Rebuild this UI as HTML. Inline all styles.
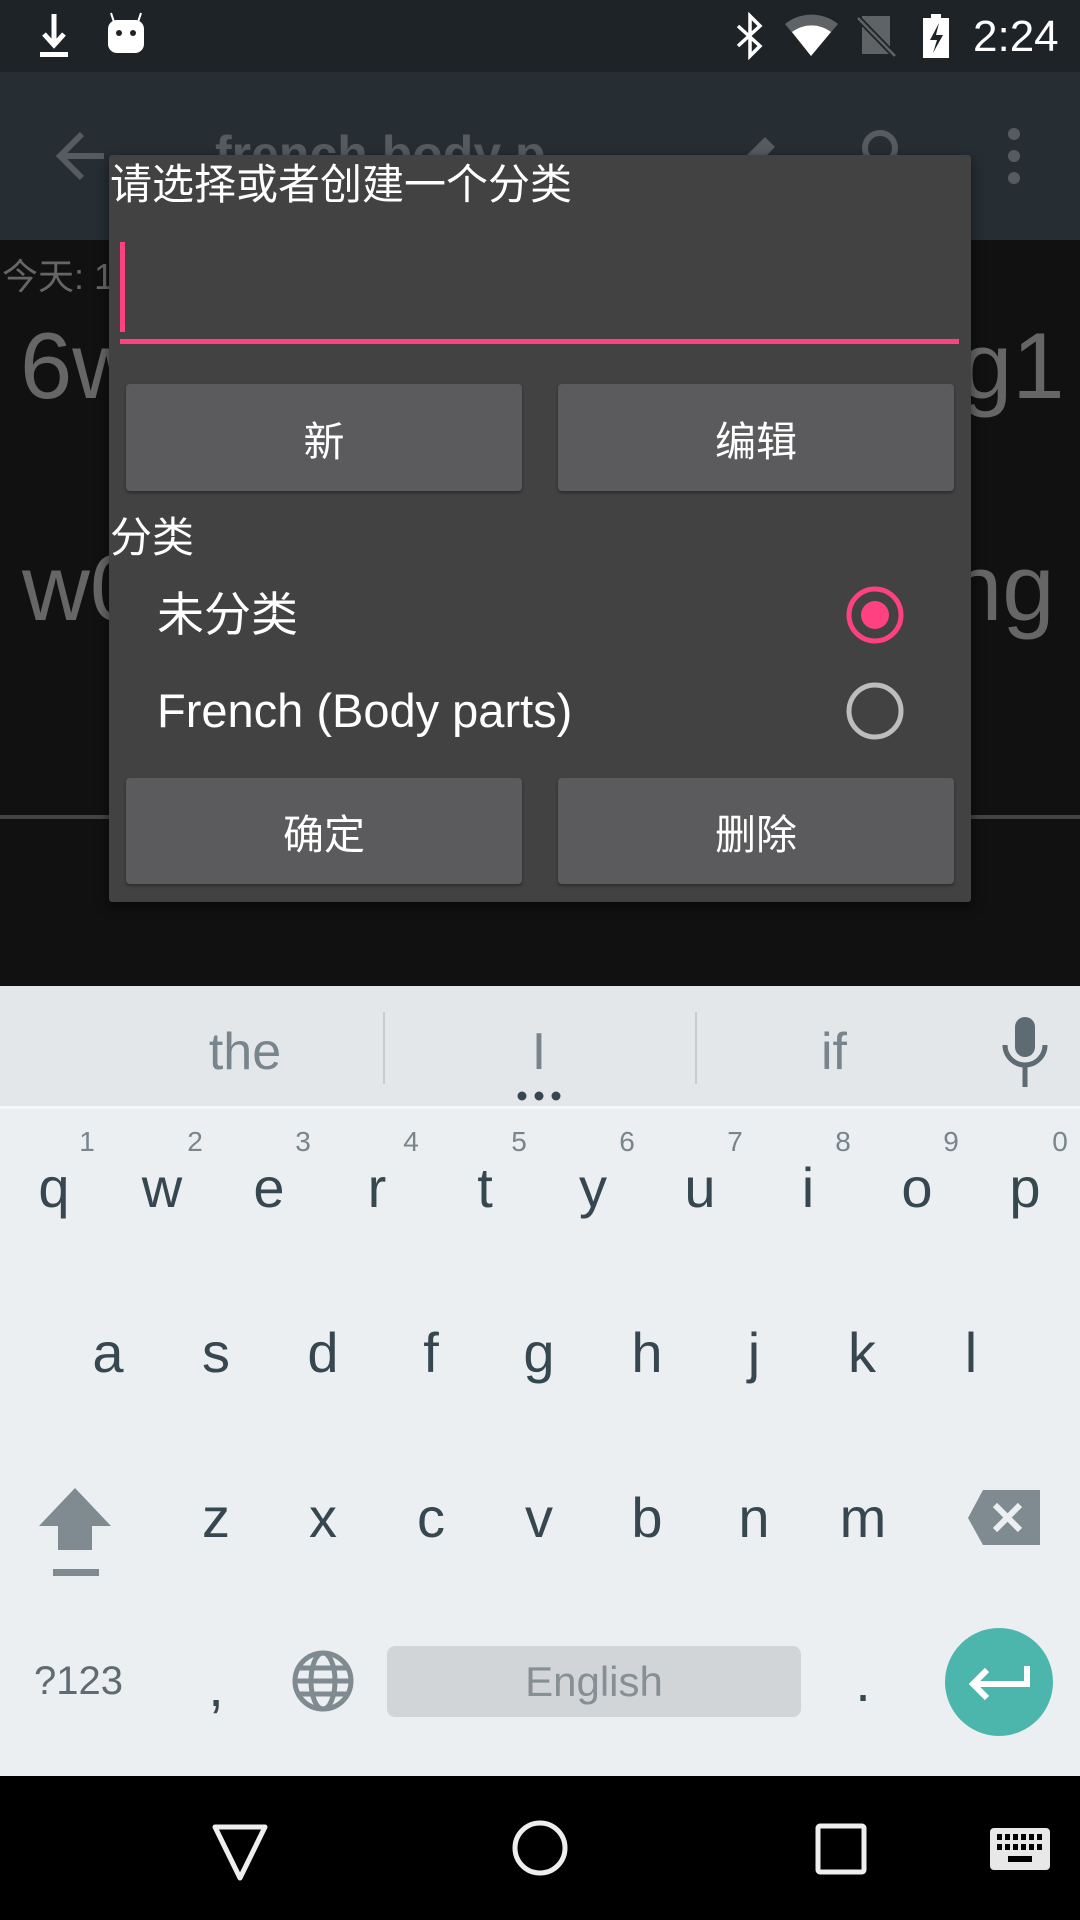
<!DOCTYPE html>
<html><head><meta charset="utf-8"><style>
*{margin:0;padding:0;box-sizing:border-box}
body{width:1080px;height:1920px;position:relative;overflow:hidden;background:#111;font-family:"Liberation Sans","Noto Sans CJK SC",sans-serif}
.a{position:absolute}
.c{position:absolute;text-align:center;white-space:nowrap}
.k{position:absolute;width:100px;text-align:center;color:#37474f;font-size:56px;line-height:70px}
.n{position:absolute;width:40px;text-align:center;color:#78858c;font-size:28px;line-height:30px}
.btn{position:absolute;background:#5b5b5d;border-radius:4px;box-shadow:0 2px 3px rgba(0,0,0,.35);color:#fff;font-size:41px;display:flex;align-items:center;justify-content:center}
</style></head><body>
<div class="a" style="left:0;top:0;width:1080px;height:72px;background:#1e2327"></div>
<svg class="a" style="left:0;top:0" width="1080" height="72">
<path d="M54 14v30M44 34l10 11 10-11" stroke="#fff" stroke-width="5" fill="none"/>
<rect x="40" y="52" width="28" height="5" fill="#fff"/>
<rect x="108" y="20" width="36" height="33" rx="9" fill="#fff"/>
<path d="M114 22l-3-9M138 22l3-9" stroke="#fff" stroke-width="2"/>
<circle cx="119" cy="33" r="3" fill="#1e2327"/><circle cx="133" cy="33" r="3" fill="#1e2327"/>
<path d="M738 26l22 20-10 10V16l10 10-22 20" stroke="#fff" stroke-width="3.5" fill="none"/>
<path d="M785 24a42 42 0 0 1 53 0L811 56z" fill="#5f6366"/>
<path d="M792 32a32 32 0 0 1 39 0L811 56z" fill="#fff"/>
<path d="M862 16h28v38h-28z" fill="#5f6366"/><path d="M858 18l37 38" stroke="#1e2327" stroke-width="6"/><path d="M858 18l37 38" stroke="#5f6366" stroke-width="2.5"/>
<rect x="931" y="14" width="10" height="4" fill="#fff"/><rect x="923" y="18" width="26" height="40" fill="#fff"/>
<path d="M939 23l-9 17h7l-4 13 10-18h-7z" fill="#1e2327"/>
</svg>
<div class="a" style="left:973px;top:13px;font-size:44px;color:#fff;line-height:48px">2:24</div>
<div class="a" style="left:0;top:72px;width:1080px;height:168px;background:#262e33"></div>
<svg class="a" style="left:0;top:72px" width="1080" height="168">
<path d="M104 84h-42M82 62L60 84l22 22" stroke="#555b5f" stroke-width="6" fill="none"/>
<path d="M735 95l30-30 10 10-30 30z" fill="#555b5f"/>
<circle cx="880" cy="76" r="15" stroke="#555b5f" stroke-width="6" fill="none"/>
<circle cx="1014" cy="62" r="6" fill="#555b5f"/><circle cx="1014" cy="84" r="6" fill="#555b5f"/><circle cx="1014" cy="106" r="6" fill="#555b5f"/>
</svg>
<div class="a" style="left:215px;top:125px;font-size:50px;color:#555b5f;font-weight:bold">french body p</div>
<div class="a" style="left:2px;top:248px;font-size:36px;color:#666">今天: 1</div>
<div class="a" style="left:20px;top:316px;font-size:94px;color:#666;line-height:100px">6w</div>
<div class="a" style="left:960px;top:316px;font-size:94px;color:#666;line-height:100px">g1</div>
<div class="a" style="left:22px;top:538px;font-size:94px;color:#666;line-height:100px">w0</div>
<div class="a" style="left:950px;top:538px;font-size:94px;color:#666;line-height:100px">ng</div>
<div class="a" style="left:0;top:815px;width:1080px;height:4px;background:#444"></div>
<div class="a" style="left:109px;top:155px;width:862px;height:747px;background:#424242;border-radius:3px;box-shadow:0 4px 12px rgba(0,0,0,.5)"></div>
<div class="a" style="left:110px;top:160px;font-size:42px;color:#fff;line-height:50px">请选择或者创建一个分类</div>
<div class="a" style="left:120px;top:242px;width:5px;height:90px;background:#ff4081"></div>
<div class="a" style="left:120px;top:339px;width:839px;height:5px;background:#ff4081"></div>
<div class="btn" style="left:126px;top:384px;width:396px;height:107px">新</div>
<div class="btn" style="left:558px;top:384px;width:396px;height:107px">编辑</div>
<div class="a" style="left:110px;top:513px;font-size:42px;color:#fff;line-height:50px">分类</div>
<div class="a" style="left:157px;top:587px;font-size:47px;color:#fff;line-height:56px">未分类</div>
<div class="a" style="left:157px;top:683px;font-size:47px;color:#fff;line-height:56px">French (Body parts)</div>
<svg class="a" style="left:840px;top:580px" width="70" height="170">
<circle cx="35" cy="35" r="26" stroke="#ff4081" stroke-width="5" fill="none"/><circle cx="35" cy="35" r="14" fill="#ff4081"/>
<circle cx="35" cy="131" r="26" stroke="#bdbdbd" stroke-width="5" fill="none"/>
</svg>
<div class="btn" style="left:126px;top:778px;width:396px;height:106px">确定</div>
<div class="btn" style="left:558px;top:778px;width:396px;height:106px">删除</div>
<div class="a" style="left:0;top:986px;width:1080px;height:120px;background:#e4e7ea"></div>
<div class="a" style="left:0;top:1106px;width:1080px;height:3px;background:#f4f6f7"></div>
<div class="a" style="left:0;top:1109px;width:1080px;height:667px;background:#eceff1"></div>
<div class="c" style="left:145px;width:200px;top:1022px;font-size:52px;color:#78858c;line-height:60px">the</div>
<div class="c" style="left:439px;width:200px;top:1022px;font-size:52px;color:#78858c;line-height:60px">I</div>
<div class="c" style="left:734px;width:200px;top:1022px;font-size:52px;color:#78858c;line-height:60px">if</div>
<div class="a" style="left:383px;top:1012px;width:2px;height:72px;background:#c9ccce"></div>
<div class="a" style="left:695px;top:1012px;width:2px;height:72px;background:#c9ccce"></div>
<svg class="a" style="left:990px;top:1015px" width="70" height="80">
<rect x="25" y="2" width="20" height="40" rx="10" fill="#5f6b72"/>
<path d="M15 30a20 20 0 0 0 40 0M35 50v22" stroke="#5f6b72" stroke-width="5" fill="none"/>
</svg>
<svg class="a" style="left:510px;top:1088px" width="60" height="16">
<circle cx="12" cy="8" r="4.5" fill="#37474f"/><circle cx="29" cy="8" r="4.5" fill="#37474f"/><circle cx="46" cy="8" r="4.5" fill="#37474f"/>
</svg>
<div class="n" style="left:67px;top:1127px">1</div><div class="n" style="left:175px;top:1127px">2</div><div class="n" style="left:283px;top:1127px">3</div><div class="n" style="left:391px;top:1127px">4</div><div class="n" style="left:499px;top:1127px">5</div><div class="n" style="left:607px;top:1127px">6</div><div class="n" style="left:715px;top:1127px">7</div><div class="n" style="left:823px;top:1127px">8</div><div class="n" style="left:931px;top:1127px">9</div><div class="n" style="left:1040px;top:1127px">0</div>
<div class="k" style="left:4px;top:1153px">q</div><div class="k" style="left:112px;top:1153px">w</div><div class="k" style="left:219px;top:1153px">e</div><div class="k" style="left:327px;top:1153px">r</div><div class="k" style="left:435px;top:1153px">t</div><div class="k" style="left:543px;top:1153px">y</div><div class="k" style="left:650px;top:1153px">u</div><div class="k" style="left:758px;top:1153px">i</div><div class="k" style="left:867px;top:1153px">o</div><div class="k" style="left:975px;top:1153px">p</div>
<div class="k" style="left:58px;top:1318px">a</div><div class="k" style="left:166px;top:1318px">s</div><div class="k" style="left:273px;top:1318px">d</div><div class="k" style="left:381px;top:1318px">f</div><div class="k" style="left:489px;top:1318px">g</div><div class="k" style="left:597px;top:1318px">h</div><div class="k" style="left:704px;top:1318px">j</div><div class="k" style="left:812px;top:1318px">k</div><div class="k" style="left:921px;top:1318px">l</div>
<div class="k" style="left:166px;top:1483px">z</div><div class="k" style="left:273px;top:1483px">x</div><div class="k" style="left:381px;top:1483px">c</div><div class="k" style="left:489px;top:1483px">v</div><div class="k" style="left:597px;top:1483px">b</div><div class="k" style="left:704px;top:1483px">n</div><div class="k" style="left:813px;top:1483px">m</div>
<svg class="a" style="left:0;top:1480px" width="1080" height="100">
<path d="M75 8l36 38h-19v24h-34v-24h-19z" fill="#7f8b90"/>
<rect x="53" y="89" width="46" height="7" fill="#7f8b90"/>
<path d="M983 10h57v55h-57l-15-27z" fill="#7f8b90"/>
<path d="M995 25l25 25M1020 25l-25 25" stroke="#eceff1" stroke-width="6"/>
</svg>
<div class="a" style="left:34px;top:1659px;font-size:40px;color:#5f6b72">?123</div>
<div class="k" style="left:166px;top:1652px">,</div>
<svg class="a" style="left:292px;top:1650px" width="62" height="62">
<circle cx="31" cy="31" r="28" stroke="#7f8b90" stroke-width="5" fill="none"/>
<ellipse cx="31" cy="31" rx="12" ry="28" stroke="#7f8b90" stroke-width="5" fill="none"/>
<path d="M3 31h56M7 18h48M7 44h48" stroke="#7f8b90" stroke-width="5"/>
</svg>
<div class="a" style="left:387px;top:1646px;width:414px;height:71px;background:#d1d5d8;border-radius:8px;text-align:center;font-size:42px;color:#858f94;line-height:71px">English</div>
<div class="k" style="left:813px;top:1647px">.</div>
<div class="a" style="left:945px;top:1628px;width:108px;height:108px;border-radius:50%;background:#4db6ac"></div>
<svg class="a" style="left:945px;top:1628px" width="108" height="108">
<path d="M82 38v18H30M42 42L28 56l14 14" stroke="#fff" stroke-width="6" fill="none"/>
</svg>
<div class="a" style="left:0;top:1776px;width:1080px;height:144px;background:#000"></div>
<svg class="a" style="left:0;top:1776px" width="1080" height="144">
<path d="M215 51h50l-25 51z" stroke="#eee" stroke-width="5" fill="none" stroke-linejoin="round"/>
<circle cx="540" cy="72" r="25" stroke="#eee" stroke-width="5" fill="none"/>
<rect x="818" y="50" width="46" height="46" rx="2" stroke="#eee" stroke-width="5" fill="none"/>
<rect x="990" y="52" width="60" height="42" rx="4" fill="#e8e8e8"/>
<g fill="#000"><rect x="997" y="58" width="5" height="6"/><rect x="1005" y="58" width="5" height="6"/><rect x="1013" y="58" width="5" height="6"/><rect x="1021" y="58" width="5" height="6"/><rect x="1029" y="58" width="5" height="6"/><rect x="1037" y="58" width="5" height="6"/>
<rect x="997" y="68" width="5" height="6"/><rect x="1005" y="68" width="5" height="6"/><rect x="1013" y="68" width="5" height="6"/><rect x="1021" y="68" width="5" height="6"/><rect x="1029" y="68" width="5" height="6"/><rect x="1037" y="68" width="5" height="6"/>
<rect x="1008" y="80" width="24" height="6"/></g>
</svg>
</body></html>
